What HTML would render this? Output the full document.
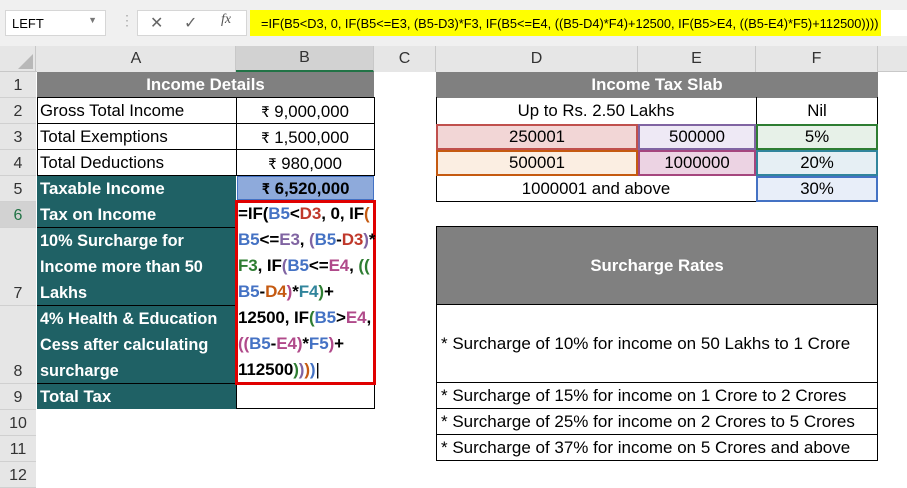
<!DOCTYPE html>
<html><head><meta charset="utf-8"><style>
*{margin:0;padding:0;box-sizing:border-box}
body{width:907px;height:479px;overflow:hidden;background:#fff;font-family:"Liberation Sans",Calibri,sans-serif;font-size:15px;color:#000;position:relative}
.a{position:absolute}
.c{position:absolute;display:flex;align-items:center;white-space:nowrap}
.ctr{justify-content:center}
.rn{position:absolute;left:0;width:36px;background:#e6e6e6;color:#333;font-size:16px;display:flex;align-items:flex-end;justify-content:center;padding-bottom:2px;border-bottom:1px solid #d0d0d0}
.ch{position:absolute;top:46px;height:26px;background:#e6e6e6;color:#333;font-size:16px;display:flex;align-items:center;justify-content:center;border-right:1px solid #c8c8c8}
.teal{background:#1f6165;color:#fff;font-weight:bold}
.grey{background:#808080;color:#fff;font-weight:bold}
.t{font-size:16.8px}
.f{font-weight:bold;line-height:26px;font-size:17px;letter-spacing:-0.1px}
.bl{color:#4472c4}.rd{color:#c0392b}.pu{color:#8064a2}.gr{color:#2e7d32}.or{color:#c55a11}.mg{color:#b04a8a}.tb{color:#31859c}
</style></head><body>
<div class="a" style="left:0;top:0;width:907px;height:46px;background:#f0f0f0"></div>
<div class="a" style="left:5px;top:10px;width:101px;height:26px;background:#fff;border:1px solid #d6d6d6;font-size:13px;padding:5px 6px">LEFT<span style="position:absolute;right:8px;top:4px;font-size:9px;color:#777">▼</span></div>
<div class="a" style="left:120px;top:12px;color:#aaa;font-size:14px">⋮</div>
<div class="a" style="left:137px;top:10px;width:110px;height:26px;background:#fff;border:1px solid #d6d6d6"></div>
<div class="a" style="left:150px;top:13px;color:#666;font-size:16px">✕</div>
<div class="a" style="left:184px;top:13px;color:#666;font-size:16px">✓</div>
<div class="a" style="left:221px;top:12px;color:#555;font-size:14px;font-style:italic;font-family:'Liberation Serif',serif">fx</div>
<div class="a" style="left:250px;top:10px;width:631px;height:26px;background:#ffff00;font-size:12.8px;padding:6px 0 0 11px;white-space:nowrap">=IF(B5&lt;D3, 0, IF(B5&lt;=E3, (B5-D3)*F3, IF(B5&lt;=E4, ((B5-D4)*F4)+12500, IF(B5&gt;E4, ((B5-E4)*F5)+112500))))</div>
<div class="a" style="left:881px;top:10px;width:26px;height:26px;background:#fff"></div>
<div class="a" style="left:0;top:46px;width:907px;height:26px;background:#e6e6e6;border-bottom:1px solid #c8c8c8"></div>
<div class="a" style="left:0;top:46px;width:36px;height:26px;border-right:1px solid #c8c8c8"></div>
<div class="a" style="left:18px;top:54px;width:0;height:0;border-left:15px solid transparent;border-bottom:15px solid #b8b8b8"></div>
<div class="ch" style="left:37px;width:199px">A</div>
<div class="ch" style="left:236px;width:138px;background:#d2d2d2;border-bottom:2px solid #217346">B</div>
<div class="ch" style="left:374px;width:62px">C</div>
<div class="ch" style="left:436px;width:202px">D</div>
<div class="ch" style="left:638px;width:118px">E</div>
<div class="ch" style="left:756px;width:122px">F</div>
<div class="a" style="left:0;top:72px;width:36px;height:407px;background:#e6e6e6;border-right:1px solid #c8c8c8"></div>
<div class="rn" style="top:72px;height:26px">1</div>
<div class="rn" style="top:98px;height:26px">2</div>
<div class="rn" style="top:124px;height:26px">3</div>
<div class="rn" style="top:150px;height:26px">4</div>
<div class="rn" style="top:176px;height:26px">5</div>
<div class="rn" style="top:202px;height:26px;background:#d2d2d2;color:#217346">6</div>
<div class="rn" style="top:228px;height:78px">7</div>
<div class="rn" style="top:306px;height:78px">8</div>
<div class="rn" style="top:384px;height:26px">9</div>
<div class="rn" style="top:410px;height:26px">10</div>
<div class="rn" style="top:436px;height:26px">11</div>
<div class="rn" style="top:462px;height:26px">12</div>
<div class="c ctr grey t" style="left:37px;top:72px;width:337px;height:26px">Income Details</div>
<div class="a" style="left:37px;top:97px;width:338px;height:79px;border:1px solid #000"></div>
<div class="a" style="left:236px;top:97px;width:1px;height:79px;background:#000"></div>
<div class="a" style="left:37px;top:123px;width:338px;height:1px;background:#000"></div>
<div class="a" style="left:37px;top:149px;width:338px;height:1px;background:#000"></div>
<div class="c t" style="left:40px;top:98px;height:26px">Gross Total Income</div>
<div class="c t" style="left:40px;top:124px;height:26px">Total Exemptions</div>
<div class="c t" style="left:40px;top:150px;height:26px">Total Deductions</div>
<div class="c ctr t" style="left:236px;top:98px;width:138px;height:26px">₹ 9,000,000</div>
<div class="c ctr t" style="left:236px;top:124px;width:138px;height:26px">₹ 1,500,000</div>
<div class="c ctr t" style="left:236px;top:150px;width:138px;height:26px">₹ 980,000</div>
<div class="c teal t" style="left:37px;top:176px;width:199px;height:26px;padding-left:3px">Taxable Income</div>
<div class="c ctr t" style="left:237px;top:176px;width:137px;height:24px;background:#8eaadb;border:1px solid #4472c4;font-weight:bold">₹ 6,520,000</div>
<div class="c teal t" style="left:37px;top:202px;width:199px;height:26px;padding-left:3px;border-bottom:1px solid #000">Tax on Income</div>
<div class="a teal" style="left:37px;top:228px;width:199px;height:78px;padding-left:3px;font-size:16.3px;line-height:26px;border-bottom:1px solid #000">10% Surcharge for<br>Income more than 50<br>Lakhs</div>
<div class="a teal" style="left:37px;top:306px;width:199px;height:78px;padding-left:3px;font-size:16.3px;line-height:26px;border-bottom:1px solid #000">4% Health &amp; Education<br>Cess after calculating<br>surcharge</div>
<div class="c teal t" style="left:37px;top:384px;width:199px;height:25px;padding-left:3px">Total Tax</div>
<div class="a" style="left:236px;top:383px;width:139px;height:26px;border:1px solid #000"></div>
<div class="a" style="left:235px;top:200px;width:141px;height:185px;border:3px solid #e00000;background:#fff"></div>
<div class="a f" style="left:238px;top:201px;white-space:nowrap">=IF(<span class="bl">B5</span>&lt;<span class="rd">D3</span>, 0, IF<span class="or">(</span><br><span class="bl">B5</span>&lt;=<span class="pu">E3</span>, <span class="pu">(</span><span class="bl">B5</span>-<span class="rd">D3</span><span class="pu">)</span>*<br><span class="gr">F3</span>, IF<span class="pu">(</span><span class="bl">B5</span>&lt;=<span class="mg">E4</span>, <span class="gr">((</span><br><span class="bl">B5</span>-<span class="or">D4</span><span class="mg">)</span>*<span class="tb">F4</span><span class="gr">)</span>+<br>12500, IF<span class="gr">(</span><span class="bl">B5</span>&gt;<span class="mg">E4</span>,<br><span class="mg">((</span><span class="bl">B5</span>-<span class="mg">E4</span><span class="mg">)</span>*<span class="bl">F5</span><span class="mg">)</span>+<br>112500<span class="gr">)</span><span class="pu">)</span><span class="or">)</span><span class="bl">)</span><span style="font-weight:normal">|</span></div>
<div class="c ctr grey t" style="left:436px;top:72px;width:442px;height:26px">Income Tax Slab</div>
<div class="a" style="left:436px;top:97px;width:442px;height:105px;border:1px solid #000;border-top:none"></div>
<div class="c ctr t" style="left:436px;top:98px;width:320px;height:26px">Up to Rs. 2.50 Lakhs</div>
<div class="a" style="left:756px;top:97px;width:1px;height:27px;background:#000"></div>
<div class="c ctr t" style="left:756px;top:98px;width:122px;height:26px">Nil</div>
<div class="c ctr t" style="left:436px;top:124px;width:202px;height:26px;background:#f2d6d6;border:2px solid #c0504d">250001</div>
<div class="c ctr t" style="left:638px;top:124px;width:118px;height:26px;background:#eee9f5;border:2px solid #8064a2">500000</div>
<div class="c ctr t" style="left:756px;top:124px;width:122px;height:26px;background:#e7f1e8;border:2px solid #2e7d32">5%</div>
<div class="c ctr t" style="left:436px;top:150px;width:202px;height:26px;background:#fbeee2;border:2px solid #c55a11">500001</div>
<div class="c ctr t" style="left:638px;top:150px;width:118px;height:26px;background:#ecd3e3;border:2px solid #a5467e">1000000</div>
<div class="c ctr t" style="left:756px;top:150px;width:122px;height:26px;background:#e6eff4;border:2px solid #31859c">20%</div>
<div class="c ctr t" style="left:436px;top:176px;width:320px;height:26px">1000001 and above</div>
<div class="c ctr t" style="left:756px;top:176px;width:122px;height:26px;background:#e8eef9;border:2px solid #4472c4">30%</div>
<div class="c ctr grey t" style="left:436px;top:226px;width:442px;height:79px;border:1px solid #000">Surcharge Rates</div>
<div class="a" style="left:436px;top:304px;width:442px;height:157px;border:1px solid #000"></div>
<div class="a" style="left:436px;top:382px;width:442px;height:1px;background:#000"></div>
<div class="a" style="left:436px;top:408px;width:442px;height:1px;background:#000"></div>
<div class="a" style="left:436px;top:434px;width:442px;height:1px;background:#000"></div>
<div class="c" style="left:441px;top:305px;height:77px;font-size:17px">* Surcharge of 10% for income on 50 Lakhs to 1 Crore</div>
<div class="c" style="left:441px;top:383px;height:25px;font-size:17px">* Surcharge of 15% for income on 1 Crore to 2 Crores</div>
<div class="c" style="left:441px;top:409px;height:25px;font-size:17px">* Surcharge of 25% for income on 2 Crores to 5 Crores</div>
<div class="c" style="left:441px;top:435px;height:25px;font-size:17px">* Surcharge of 37% for income on 5 Crores and above</div>
</body></html>
